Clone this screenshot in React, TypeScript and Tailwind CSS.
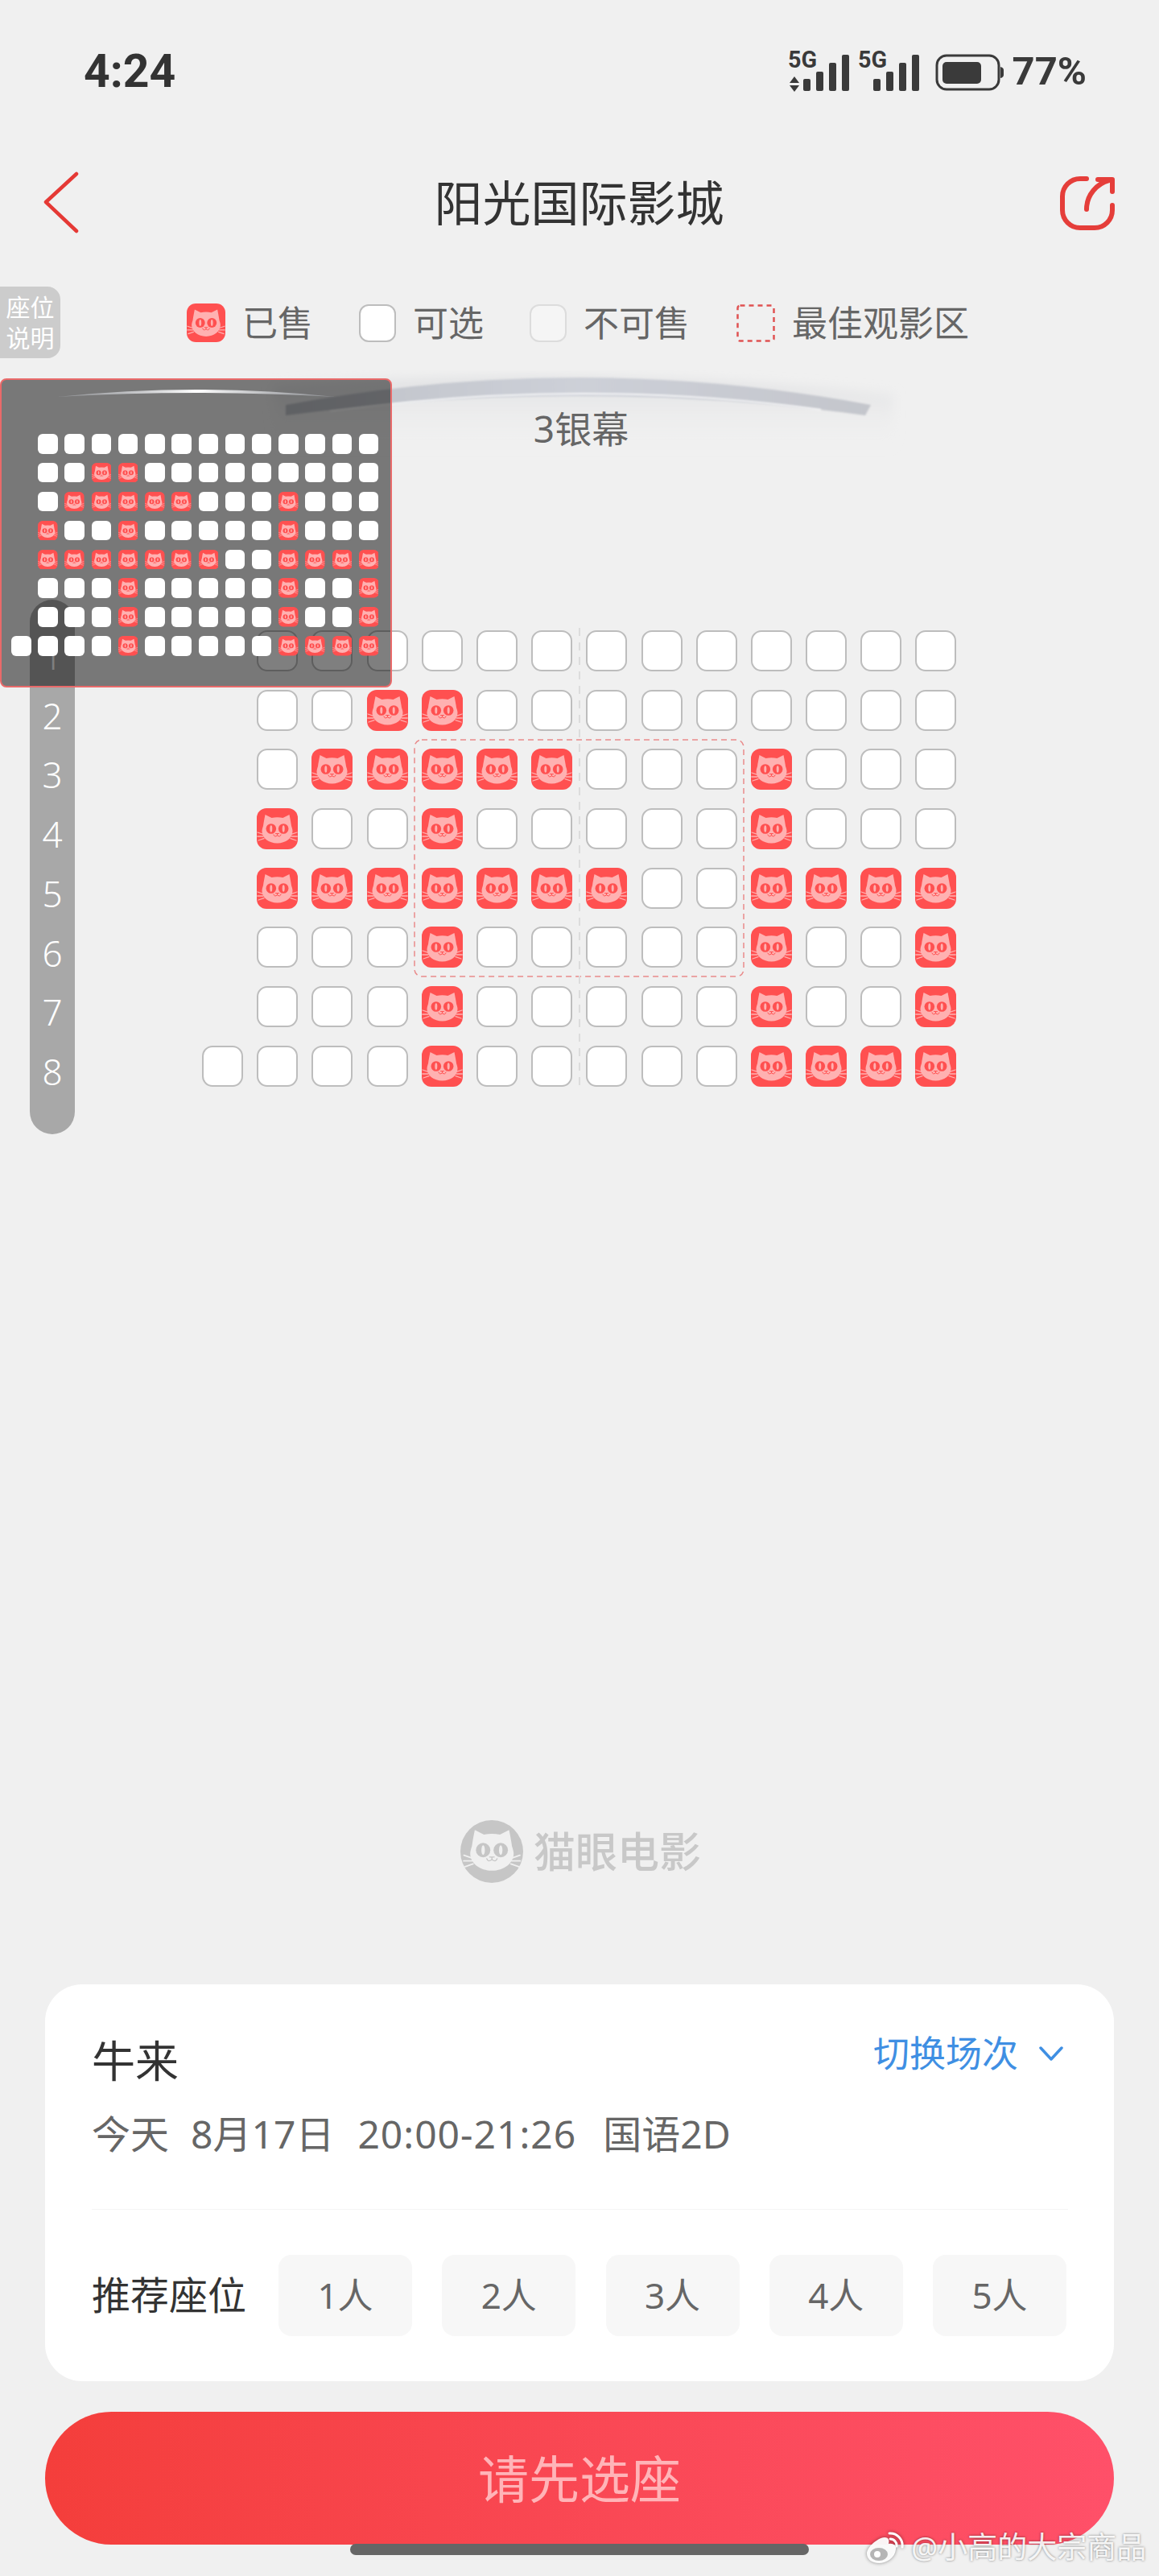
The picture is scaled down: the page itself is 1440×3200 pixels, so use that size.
import React from "react";

const FONT = "font-['Noto_Sans','Noto_Sans_CJK_SC',sans-serif]";

function CatFace({ face, eye }: { face: string; eye: string }) {
  return (
    <g>
      <path
        d="M10.5 8 L18.5 12 Q25.5 10.5 32.5 12 L40.5 8 C41.5 13 42.5 18 43 22 C44 25 44.5 27 44.5 28.5 C44.5 37 36 43.5 25.5 43.5 C15 43.5 6.5 37 6.5 28.5 C6.5 27 7 25 8 22 C8.5 18 9.5 13 10.5 8 Z"
        fill={face}
      />
      <circle cx="17.8" cy="25.5" r="6.3" fill={eye} />
      <circle cx="33.2" cy="25.5" r="6.3" fill={eye} />
      <ellipse cx="17.8" cy="25.5" rx="1.5" ry="4.2" fill={face} />
      <ellipse cx="33.2" cy="25.5" rx="1.5" ry="4.2" fill={face} />
      <path
        d="M25.5 32 V33.5 M21 33 Q22 36.5 25.5 33.8 Q29 36.5 30 33 M23.5 31.6 H27.5"
        stroke={eye}
        strokeWidth="1"
        fill="none"
        strokeLinecap="round"
      />
      <path
        d="M1 30 L8 32.4 M0.8 35 L8 35 M2 40 L9 37.6 M50 30 L43 32.4 M50.2 35 L43 35 M49 40 L42 37.6"
        stroke={face}
        strokeWidth="1.3"
        strokeLinecap="round"
      />
    </g>
  );
}

function Sold({ className }: { className: string }) {
  return (
    <svg viewBox="0 0 51 51" className={className}>
      <rect x="0" y="0" width="51" height="51" rx="12" fill="#ff5050" />
      <CatFace face="#ffb1b1" eye="#ff5050" />
    </svg>
  );
}

const rows: { start: number; sold: number[] }[] = [
  { start: 1, sold: [] },
  { start: 1, sold: [3, 4] },
  { start: 1, sold: [2, 3, 4, 5, 6, 10] },
  { start: 1, sold: [1, 4, 10] },
  { start: 1, sold: [1, 2, 3, 4, 5, 6, 7, 10, 11, 12, 13] },
  { start: 1, sold: [4, 10, 13] },
  { start: 1, sold: [4, 10, 13] },
  { start: 0, sold: [4, 10, 11, 12, 13] },
];
const cols = Array.from({ length: 14 }, (_, i) => i);

function SeatGrid() {
  return (
    <div className="ml-[251px] grid grid-cols-[repeat(14,51px)] gap-x-[17.2px] gap-y-[22.7px]">
      {rows.flatMap((r, ri) =>
        cols.map((c) => {
          const k = `${ri}-${c}`;
          if (c < r.start) return <div key={k} className="h-[51px] w-[51px]" />;
          if (r.sold.includes(c)) return <Sold key={k} className="block h-[51px] w-[51px]" />;
          return (
            <div
              key={k}
              className="h-[51px] w-[51px] rounded-[13px] border-2 border-[#bdbdbd] bg-white"
            />
          );
        })
      )}
    </div>
  );
}

function MiniMap() {
  return (
    <div className="absolute left-0 top-[470px] z-20 h-[384px] w-[487px] rounded-[8px] border-2 border-[#e96a6a] bg-[rgba(0,0,0,0.5)] pl-[12px] pt-[67px]">
      <svg className="absolute left-[69px] top-[10px]" width="346" height="14" viewBox="0 0 346 14">
        <defs>
          <linearGradient id="mini" x1="0" x2="1" y1="0" y2="0">
            <stop offset="0" stopColor="#b8bcc4" stopOpacity="0.4" />
            <stop offset="0.5" stopColor="#ffffff" stopOpacity="1" />
            <stop offset="1" stopColor="#b8bcc4" stopOpacity="0.4" />
          </linearGradient>
        </defs>
        <path d="M0 11 Q173 -7 346 11 Q173 1 0 11 Z" fill="url(#mini)" />
      </svg>
      <div className="grid grid-cols-[repeat(14,24.5px)] gap-x-[8.72px] gap-y-[11.4px]">
        {rows.flatMap((r, ri) =>
          cols.map((c) => {
            const k = `${ri}-${c}`;
            if (c < r.start) return <div key={k} className="h-[24.5px] w-[24.5px]" />;
            if (r.sold.includes(c)) return <Sold key={k} className="block h-[24.5px] w-[24.5px]" />;
            return <div key={k} className="h-[24.5px] w-[24.5px] rounded-[6px] bg-white" />;
          })
        )}
      </div>
    </div>
  );
}

function Signal({ x }: { x: number }) {
  return (
    <g fill="#3a3a3a">
      <text
        x={x + 2}
        y="26"
        fontFamily="Roboto, sans-serif"
        fontWeight="700"
        fontSize="30"
        textLength="36"
        lengthAdjust="spacingAndGlyphs"
      >
        5G
      </text>
      <rect x={x + 21} y="40" width="9" height="15" rx="2" />
      <rect x={x + 37} y="31" width="9" height="24" rx="2" />
      <rect x={x + 53} y="20" width="9" height="35" rx="2" />
      <rect x={x + 69} y="10" width="9" height="45" rx="2" />
    </g>
  );
}

function StatusIcons() {
  return (
    <svg width="275" height="80" viewBox="980 45 275 80" className="block">
      <g transform="translate(0 55)">
        <Signal x={980} />
        <Signal x={1067} />
        <path d="M990 37 L996 45 H984 Z M990 56 L996 48 H984 Z" fill="#3a3a3a" />
      </g>
      <rect x="1167" y="66" width="77" height="42" rx="12" fill="none" stroke="#3a3a3a" strokeWidth="3" />
      <rect x="1174" y="74" width="48" height="27" rx="5" fill="#3a3a3a" />
      <path d="M1246 80 Q1250 81 1250 84 V90 Q1250 93 1246 94 Z" fill="#3a3a3a" />
    </svg>
  );
}

function LegendItem({ icon, label, gap }: { icon: React.ReactNode; label: string; gap: string }) {
  return (
    <div className={`flex items-center gap-[21px] ${gap}`}>
      {icon}
      <span className="text-[44px] leading-[48px] text-[#666666]">{label}</span>
    </div>
  );
}

function Logo() {
  return (
    <div className="ml-[572px] flex items-center gap-[13px]">
      <svg width="78" height="78" viewBox="0 0 78 78" className="block">
        <circle cx="39" cy="39" r="39" fill="#c6c6c6" />
        <g transform="translate(3 1) scale(1.42)">
          <CatFace face="#f0f0f0" eye="#c6c6c6" />
        </g>
      </svg>
      <span className="text-[52px] font-medium leading-[56px] text-[#c8c8c8]">猫眼电影</span>
    </div>
  );
}

export default function App() {
  return (
    <div className={`relative flex h-[3200px] w-[1440px] flex-col overflow-hidden bg-[#f0f0f0] ${FONT}`}>
      {/* status bar */}
      <div className="flex h-[176px] items-center justify-between pl-[104px] pr-[90px]">
        <span className="font-['Roboto',sans-serif] text-[57px] font-bold leading-none text-[#333333]">
          4:24
        </span>
        <div className="flex items-center gap-[6px]">
          <StatusIcons />
          <span className="font-['Roboto',sans-serif] text-[49px] font-bold leading-none text-[#3a3a3a]">
            77%
          </span>
        </div>
      </div>

      {/* nav */}
      <div className="grid h-[152px] grid-cols-[1fr_auto_1fr] items-center pl-[53px] pr-[54px]">
        <svg width="46" height="80" viewBox="0 0 46 80" className="block">
          <path d="M42 3 L4 38 L42 74" transform="translate(0 1)" fill="none" stroke="#e53935" strokeWidth="4.5" strokeLinecap="round" strokeLinejoin="round" />
        </svg>
        <span className="text-[60px] leading-[70px] text-[#333333]">阳光国际影城</span>
        <svg width="70" height="70" viewBox="0 0 70 70" className="block justify-self-end">
          <path d="M34 5 H26 A22 22 0 0 0 4 27 V44 A22 22 0 0 0 26 66 H44 A22 22 0 0 0 66 44 V38" fill="none" stroke="#e53e3a" strokeWidth="6" strokeLinecap="round" />
          <path d="M34 43 C34 25 47 11 62 7" fill="none" stroke="#e53e3a" strokeWidth="6" strokeLinecap="round" />
          <path d="M48 6 H66 V21" fill="none" stroke="#e53e3a" strokeWidth="6" strokeLinecap="round" strokeLinejoin="round" />
        </svg>
      </div>

      {/* legend */}
      <div className="flex h-[141px] items-start pl-[232px] pt-[49px]">
        <LegendItem gap="" icon={<Sold className="block h-[48px] w-[48px]" />} label="已售" />
        <LegendItem
          gap="ml-[57px]"
          icon={<div className="h-[47px] w-[46px] rounded-[12px] border-2 border-[#bdbdbd] bg-white" />}
          label="可选"
        />
        <LegendItem
          gap="ml-[57px]"
          icon={<div className="h-[47px] w-[46px] rounded-[12px] border-2 border-[#dcdcdc] bg-[#f5f5f5]" />}
          label="不可售"
        />
        <LegendItem
          gap="ml-[58px]"
          icon={
            <svg width="48" height="47" viewBox="0 0 48 47" className="block">
              <rect x="1.5" y="1.5" width="45" height="44" rx="3" fill="none" stroke="#e05252" strokeWidth="2.5" strokeDasharray="6 5" />
            </svg>
          }
          label="最佳观影区"
        />
      </div>

      {/* screen */}
      <div className="relative flex h-[314px] flex-col items-center pl-[4px] pt-[40px]">
        <svg className="absolute left-[300px] top-[-9px]" width="840" height="110" viewBox="-20 0 840 110">
          <defs>
            <linearGradient id="glow" x1="0" x2="0" y1="0" y2="1">
              <stop offset="0" stopColor="#dfe0e2" stopOpacity="1" />
              <stop offset="1" stopColor="#f0f0f0" stopOpacity="0" />
            </linearGradient>
            <filter id="blur" x="-5%" y="-20%" width="110%" height="140%">
              <feGaussianBlur stdDeviation="7" />
            </filter>
            <filter id="soft" x="-2%" y="-10%" width="104%" height="120%">
              <feGaussianBlur stdDeviation="0.8" />
            </filter>
            <linearGradient id="band" x1="0" x2="1" y1="0" y2="0">
              <stop offset="0" stopColor="#bfc2c8" />
              <stop offset="0.5" stopColor="#cdd0d8" />
              <stop offset="1" stopColor="#c4c6cc" />
            </linearGradient>
          </defs>
          <path d="M20 20 Q400 -8 790 30 L790 98 L25 98 Z" fill="url(#glow)" filter="url(#blur)" />
          <path d="M35 43 Q400 -25 762 43 L755 56 Q400 8 35 56 Z" fill="url(#band)" filter="url(#soft)" />
          <path d="M90 51 Q400 8 700 49" fill="none" stroke="#ffffff" strokeOpacity="0.85" strokeWidth="2" filter="url(#soft)" />
        </svg>
        <span className="relative text-[46px] leading-[46px] text-[#666666]">3银幕</span>
      </div>

      {/* seats */}
      <SeatGrid />

      {/* logo */}
      <div className="mt-[911px]">
        <Logo />
      </div>

      {/* card */}
      <div className="mx-[56px] mt-[126px] rounded-[46px] bg-white pb-[56px] pl-[58px] pr-[57px] pt-[64px]">
        <div className="flex items-start justify-between pr-[6px]">
          <span className="mt-[4px] text-[54px] leading-[54px] text-[#333333]">牛来</span>
          <div className="flex items-center gap-[26px]">
            <span className="text-[45px] leading-[44px] text-[#3f8fe3]">切换场次</span>
            <svg width="30" height="18" viewBox="0 0 30 18" className="block">
              <path d="M2 2 L15 16 L28 2" fill="none" stroke="#3f8fe3" strokeWidth="3.5" strokeLinecap="round" strokeLinejoin="round" />
            </svg>
          </div>
        </div>
        <div className="mt-[41px] flex text-[48px] leading-[46px] text-[#666666]">
          <span>今天</span>
          <span className="ml-[27px]">8月17日</span>
          <span className="ml-[29px] tracking-[1px]">20:00-21:26</span>
          <span className="ml-[33px]">国语2D</span>
        </div>
        <div className="mt-[70px] h-px bg-[#f5f5f5]" />
        <div className="mt-[56px] flex items-center pr-[2px]">
          <span className="w-[232px] text-[48px] leading-[50px] text-[#333333]">推荐座位</span>
          <div className="flex flex-1 justify-between">
            {["1人", "2人", "3人", "4人", "5人"].map((t) => (
              <div
                key={t}
                className="flex h-[101px] w-[166px] items-center justify-center rounded-[16px] bg-[#f7f7f7] text-[44px] text-[#666666]"
              >
                {t}
              </div>
            ))}
          </div>
        </div>
      </div>

      {/* button */}
      <div className="mx-[56px] mt-[38px] flex h-[165px] items-center justify-center rounded-full bg-gradient-to-r from-[#f43e3b] to-[#ff5069]">
        <span className="text-[63px] leading-none text-[#ffb4b8]">请先选座</span>
      </div>

      {/* overlays */}
      <div className="absolute left-0 top-[356px] flex h-[89px] w-[75px] flex-col items-center justify-center rounded-r-[16px] bg-[#cccccc] text-[30px] leading-[38px] text-white">
        <span>座位</span>
        <span>说明</span>
      </div>

      <div className="absolute left-[37px] top-[745px] z-10 flex h-[664px] w-[56px] flex-col items-center rounded-[28px] bg-[#a8a8a8] pt-[34px] text-[44px] font-light leading-[73.7px] text-white">
        {[1, 2, 3, 4, 5, 6, 7, 8].map((n) => (
          <span key={n}>{n}</span>
        ))}
      </div>

      <svg className="absolute left-[514px] top-[918px]" width="411" height="296" viewBox="0 0 411 296">
        <rect x="1" y="1" width="409" height="294" rx="9" fill="none" stroke="#e98a8a" strokeWidth="1.5" strokeDasharray="7 5" />
      </svg>
      <svg className="absolute left-[718px] top-[780px]" width="4" height="568" viewBox="0 0 4 568">
        <line x1="2" y1="0" x2="2" y2="568" stroke="#dcdcdc" strokeWidth="2" strokeDasharray="10 8" />
      </svg>

      <MiniMap />

      <div className="absolute left-[435px] top-[3160px] h-[14px] w-[570px] rounded-full bg-[#666666]" />

      <div className="absolute left-[1075px] top-[3143px] z-30 flex items-center gap-[9px]">
        <svg width="48" height="42" viewBox="0 0 48 42" className="block drop-shadow-[0_0_2px_rgba(0,0,0,0.45)]">
          <path d="M2 29 C2 22 14 10 24 9 C30 9 30 14 29 17 C35 16 39 19 38 24 C37 34 27 41 17 41 C8 41 2 36 2 29 Z" fill="#ffffff" fillOpacity="0.95" />
          <ellipse cx="17" cy="30" rx="11" ry="8" fill="#b5b5b5" />
          <circle cx="15" cy="30" r="4" fill="#ffffff" />
          <path d="M30 4 A15 15 0 0 1 46 21 M31 11 A8 8 0 0 1 39 20" fill="none" stroke="#ffffff" strokeWidth="3" strokeLinecap="round" />
        </svg>
        <span className="text-[37px] leading-[42px] text-white/90 [text-shadow:0_0_3px_rgba(0,0,0,0.5)]">
          @小高的大宗商品
        </span>
      </div>
    </div>
  );
}
